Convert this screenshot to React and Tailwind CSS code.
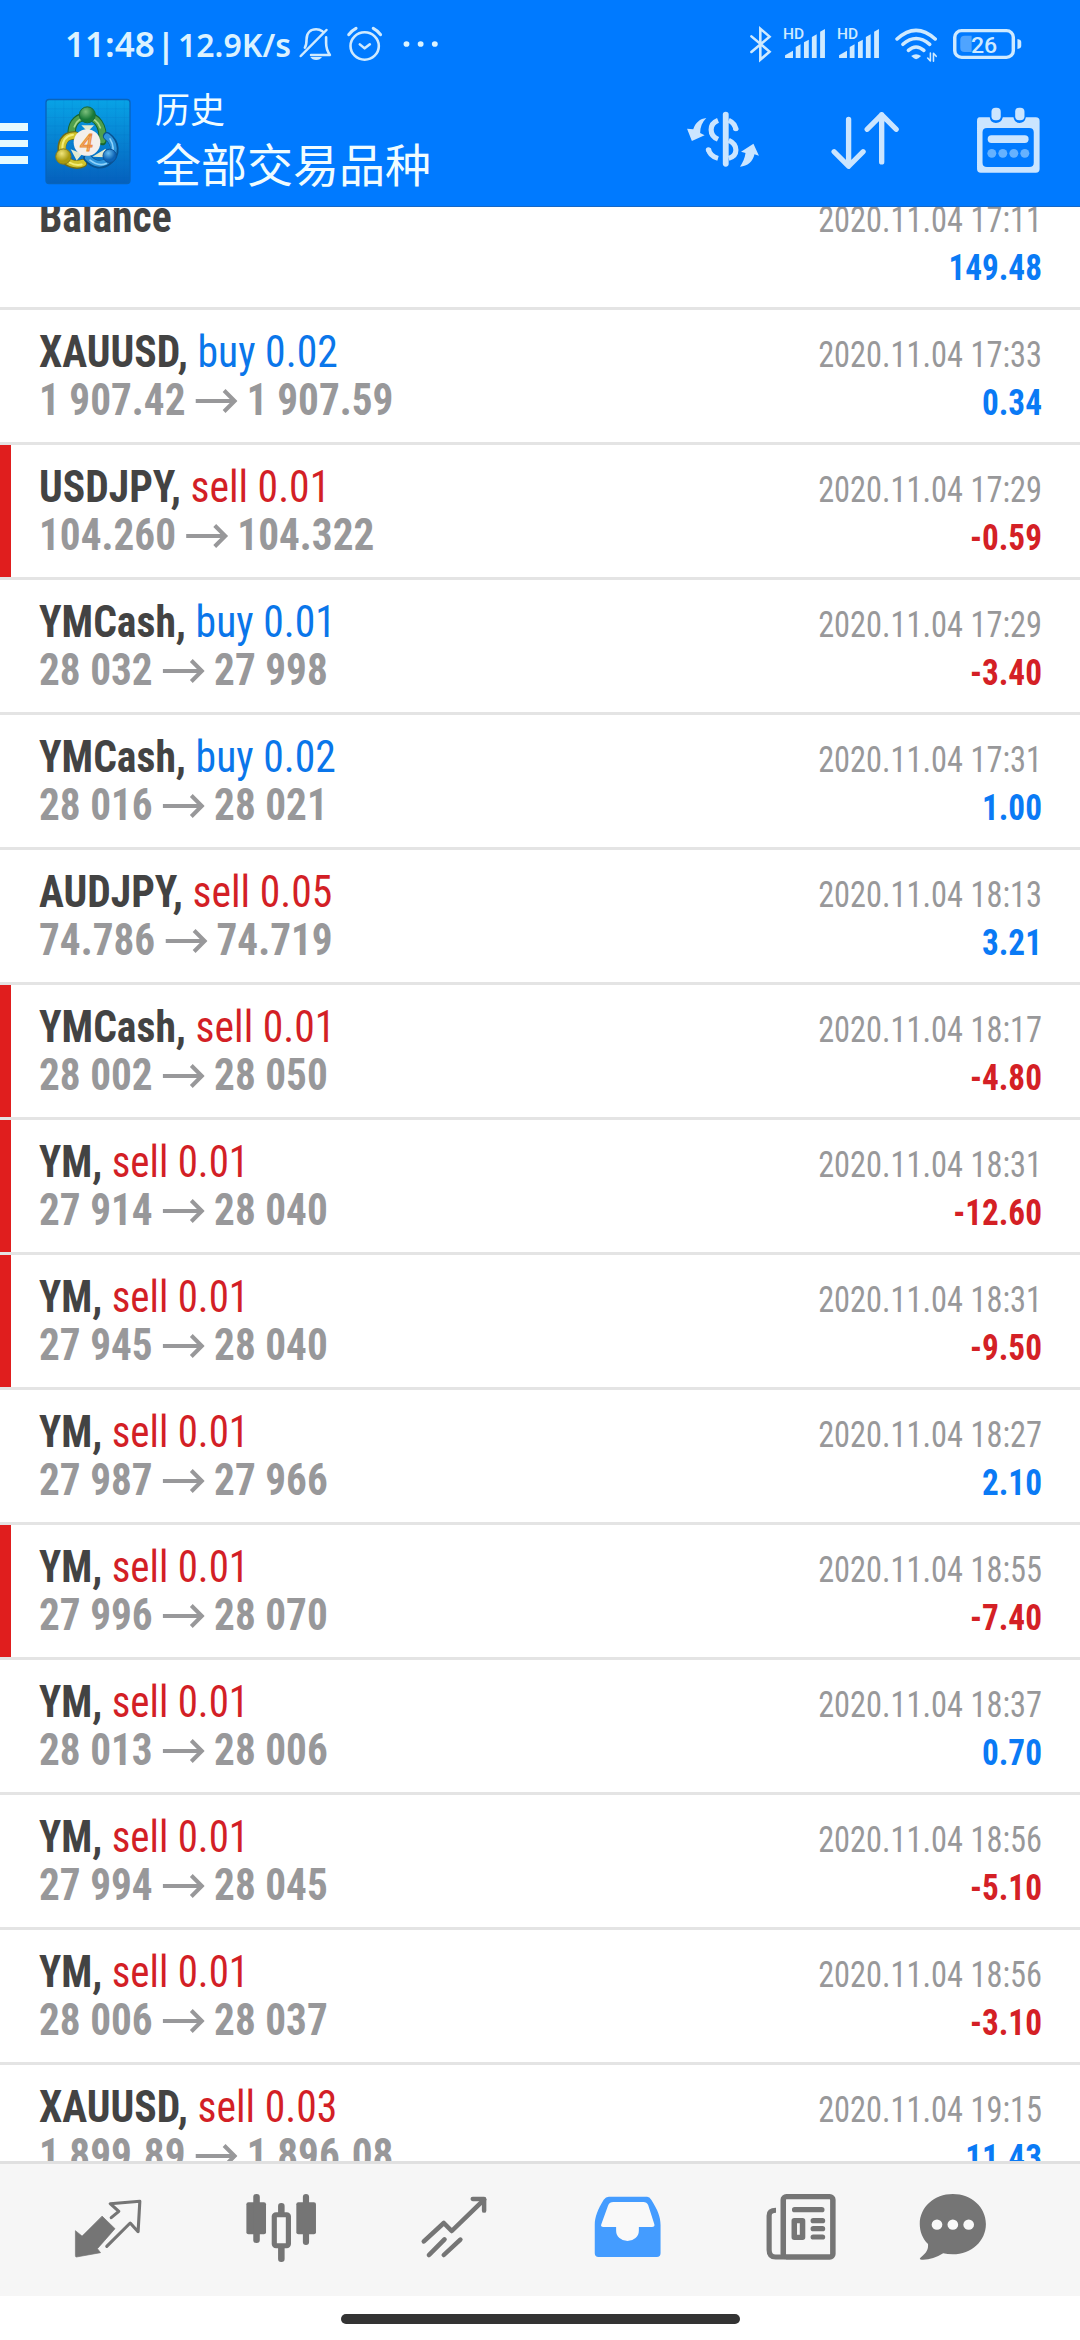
import React from "react";

const trades = [
  ["XAUUSD", "buy", "0.02", "1 907.42", "1 907.59", "17:33", "0.34", false],
  ["USDJPY", "sell", "0.01", "104.260", "104.322", "17:29", "-0.59", true],
  ["YMCash", "buy", "0.01", "28 032", "27 998", "17:29", "-3.40", false],
  ["YMCash", "buy", "0.02", "28 016", "28 021", "17:31", "1.00", false],
  ["AUDJPY", "sell", "0.05", "74.786", "74.719", "18:13", "3.21", false],
  ["YMCash", "sell", "0.01", "28 002", "28 050", "18:17", "-4.80", true],
  ["YM", "sell", "0.01", "27 914", "28 040", "18:31", "-12.60", true],
  ["YM", "sell", "0.01", "27 945", "28 040", "18:31", "-9.50", true],
  ["YM", "sell", "0.01", "27 987", "27 966", "18:27", "2.10", false],
  ["YM", "sell", "0.01", "27 996", "28 070", "18:55", "-7.40", true],
  ["YM", "sell", "0.01", "28 013", "28 006", "18:37", "0.70", false],
  ["YM", "sell", "0.01", "27 994", "28 045", "18:56", "-5.10", false],
  ["YM", "sell", "0.01", "28 006", "28 037", "18:56", "-3.10", false],
  ["XAUUSD", "sell", "0.03", "1 899.89", "1 896.08", "19:15", "11.43", false],
];

function Icon({ box, className, children }) {
  return (
    <svg viewBox={box} preserveAspectRatio="none" className={"block shrink-0 [font-stretch:100%] " + className} fill="none" strokeLinecap="round" strokeLinejoin="round">
      {children}
    </svg>
  );
}

function Signal({ className }) {
  return (
    <Icon box="703 75 128 114" className={"h-[38px] w-[44px] " + className}>
      <text x="703" y="117" fontSize="45" fontWeight="500" fontFamily="Roboto, sans-serif" fill="#cfeaff">HD</text>
      <g fill="#cfeaff">
        <path d="M709 174v-8l23-14v22z" />
        <path d="M740 174v-33l14-8v41z" />
        <path d="M764 174v-47l14-8v55z" />
        <path d="M787 174v-63l14-8v71z" />
        <path d="M811 174v-79l14-8v87z" />
      </g>
    </Icon>
  );
}

function StatusBar() {
  return (
    <div className="flex h-[88px] items-start text-[#dcf2ff]">
      <div className="ml-[65px] mt-[20px] flex h-[48px] w-[233px] items-baseline whitespace-nowrap font-['Noto_Sans',sans-serif] font-semibold leading-[48px] [font-stretch:100%]">
        <span className="text-[35px]">11:48</span>
        <span className="ml-[2px] text-[33px] font-bold">|</span>
        <span className="ml-[3px] text-[32px]">12.9K/s</span>
      </div>
      <Icon box="865 75 105 114" className="mt-[25px] h-[38px] w-[36px]">
        <g stroke="#cfeaff" strokeWidth="7.5">
          <path d="M873 168L948 90M885 143c5-8 5-14 5-25 0-20 12-30 28-30 8 0 14 3 18 6M947 112v18c0 18 5 26 11 35h-55" />
        </g>
        <path d="M901 171h34c-4 6-9 9-17 9s-13-3-17-9z" fill="#cfeaff" />
      </Icon>
      <Icon box="1005 75 110 114" className="ml-[12px] mt-[25px] h-[38px] w-[38px]">
        <g stroke="#cfeaff" strokeWidth="7.5">
          <circle cx="1059" cy="138" r="41" />
          <path d="M1045 133l14 12 15-12" />
          <path d="M1013 104q8-12 21-19M1105 104q-8-12-21-19" strokeWidth="9" />
        </g>
      </Icon>
      <Icon box="1167 75 110 114" className="ml-[18px] mt-[25px] h-[38px] w-[38px]">
        <g fill="#dcf4ff">
          <circle cx="1180" cy="132" r="8.5" />
          <circle cx="1221" cy="132" r="8.5" />
          <circle cx="1262" cy="132" r="8.5" />
        </g>
      </Icon>
      <Icon box="604 75 70 114" className="ml-[309px] mt-[25px] h-[38px] w-[24px]">
        <path d="M611 109l53 46-27 24V86l27 24-53 46" stroke="#cfeaff" strokeWidth="7.5" strokeLinejoin="miter" />
      </Icon>
      <Signal className="ml-[10px] mt-[25px]" />
      <Signal className="ml-[10px] mt-[25px]" />
      <Icon box="1025 75 134 114" className="ml-[13px] mt-[25px] h-[38px] w-[46px]">
        <g stroke="#cfeaff" strokeWidth="10.5">
          <path d="M1034 117q55-52 111 0" />
          <path d="M1051 133q38-35 78 0" />
          <path d="M1067 151q22-20 45 0" />
        </g>
        <path d="M1075 168q14-11 29 0l-8 7q-7 5-13 0z" fill="#cfeaff" />
        <path d="M1131 159v24l-8-9M1140 184v-24l8 9" stroke="#cfeaff" strokeWidth="4.5" />
      </Icon>
      <Icon box="1193 75 209 114" className="ml-[12px] mt-[25px] h-[38px] w-[72px]">
        <rect x="1201" y="92" width="170" height="80" rx="20" stroke="#cfeaff" strokeWidth="10" />
        <path d="M1230 107h20v49h-20q-13 0-13-13v-23q0-13 13-13z" fill="#4fa4ff" />
        <path d="M1383 117q11 2 11 9v12q0 7-11 9z" fill="#cfeaff" />
        <text x="1248" y="158" fontSize="67" fontWeight="500" fontFamily="Roboto, sans-serif" fill="#cfeaff">26</text>
      </Icon>
    </div>
  );
}

function Logo() {
  return (
    <svg viewBox="46 38 258 260" className="ml-[17px] mt-[10px] block h-[87px] w-[86px] shrink-0 [font-stretch:100%]">
      <defs>
        <linearGradient id="sky" x1="0" y1="0" x2="0" y2="1"><stop offset="0" stopColor="#08a3e6" /><stop offset="1" stopColor="#0560bd" /></linearGradient>
        <radialGradient id="green" cx=".4" cy=".3"><stop offset="0" stopColor="#7cc07c" /><stop offset="1" stopColor="#197a38" /></radialGradient>
        <radialGradient id="yellow" cx=".4" cy=".3"><stop offset="0" stopColor="#f0e57c" /><stop offset="1" stopColor="#a99a10" /></radialGradient>
        <radialGradient id="blue" cx=".4" cy=".3"><stop offset="0" stopColor="#69bdf0" /><stop offset="1" stopColor="#0d63b5" /></radialGradient>
      </defs>
      <rect x="49" y="42" width="252" height="252" rx="9" fill="url(#sky)" stroke="#0864bb" strokeWidth="4" />
      <path d="M76 44v248M102 44v248M128 44v248M154 44v248M180 44v248M206 44v248M232 44v248M258 44v248M284 44v248M50 70h250M50 96h250M50 122h250M50 148h250M50 174h250M50 200h250M50 226h250M50 252h250M50 278h250" stroke="#0a6fc4" strokeOpacity=".2" strokeWidth="2" />
      <g fill="none" strokeLinecap="round">
        <path d="M126 138C128 108 147 93 173 93s50 26 45 74" stroke="#17662f" strokeWidth="25" />
        <path d="M126 138C128 109 147 94 173 94s50 25 45 70" stroke="#4f9f4c" strokeWidth="19" />
        <path d="M134 124c6-18 18-27 38-27s34 13 40 30" stroke="#a7d889" strokeWidth="5" />
        <path d="M136 150C102 148 92 175 98 205c8 30 42 38 62 28" stroke="#716b17" strokeWidth="26" />
        <path d="M136 150C104 150 94 175 99 205c8 28 38 36 60 28" stroke="#d0c32c" strokeWidth="20" />
        <path d="M130 148q-32 4-32 42M120 231q17 10 36 6" stroke="#f3ec79" strokeWidth="6" />
        <path d="M232 152c28 20 30 54 5 74-20 17-44 14-64-9" stroke="#095290" strokeWidth="25" />
        <path d="M232 153c26 20 27 52 3 72-19 15-42 12-60-8" stroke="#2e94da" strokeWidth="18" />
        <path d="M241 160q18 28 1 54M181 224q26 20 49 10" stroke="#8fd2fa" strokeWidth="5" />
      </g>
      <path d="M123 191l35 14-17 20zM188 214l40-24v25zM155 119h38l-19 20z" fill="#e1ead0" />
      <circle cx="173" cy="88" r="24" fill="url(#green)" stroke="#17693a" strokeWidth="3" />
      <circle cx="101" cy="213" r="23" fill="url(#yellow)" stroke="#877c19" strokeWidth="3" />
      <circle cx="240" cy="211" r="20" fill="url(#blue)" stroke="#0c5298" strokeWidth="3" />
      <circle cx="172" cy="171" r="40" fill="#f3efeb" />
      <text x="171" y="195" textAnchor="middle" fontSize="70" fontStyle="italic" fontFamily="Roboto, sans-serif" fill="#f6ba72" stroke="#e98a38" strokeWidth="3">4</text>
    </svg>
  );
}

function Toolbar() {
  return (
    <div className="flex h-[118px] items-start">
      <div className="mt-[35px] flex w-[28px] flex-col gap-[9px]">
        <div className="h-[7.5px] bg-[#e6faff]" />
        <div className="h-[7.5px] bg-[#e6faff]" />
        <div className="h-[7.5px] bg-[#e6faff]" />
      </div>
      <Logo />
      <div className="ml-[24px] w-[530px] whitespace-nowrap font-['Noto_Sans_CJK_SC',sans-serif] text-[#f0fcff]">
        <div className="-mt-[3px] h-[46px] text-[35px] leading-[46px]">历史</div>
        <div className="mt-[1px] h-[60px] text-[46px] leading-[60px]">全部交易品种</div>
      </div>
      <Icon box="418 330 221 180" className="mt-[22px] h-[60px] w-[76px]">
        <g fill="#cbe5ff">
          <rect x="528" y="335" width="17" height="165" rx="8.5" />
          <path d="M480 354C462 356 448 368 442 388L424 386L438 423L475 406L462 399C462 382 468 366 480 354z" />
          <path d="M578 500C586 488 592 474 594 459L581 455L617 431L633 467L620 463C616 484 600 499 578 500z" />
        </g>
        <g stroke="#cbe5ff" strokeWidth="15" strokeLinecap="butt">
          <path d="M514 361q-20 8-20 28t20 29M545 361q18 8 21 29M545 421q21 10 21 29t-21 25M486 446q3 22 28 29" />
        </g>
        <circle cx="566" cy="386" r="7.5" fill="#cbe5ff" />
        <circle cx="486" cy="449" r="7.5" fill="#cbe5ff" />
      </Icon>
      <Icon box="842 330 209 186" className="ml-[69px] mt-[22px] h-[62px] w-[72px]">
        <path d="M896 358v140M854 455l42 44 42-44M992 486V344M950 388l42-44 42 44" stroke="#cbe5ff" strokeWidth="15.5" />
      </Icon>
      <Icon box="1266 315 192 210" className="ml-[74px] mt-[17px] h-[70px] w-[66px]">
        <path fillRule="evenodd" fill="#cbe5ff" d="M1276 352h30q2 17 18 17t20-17h31q3 17 18 17t18-17h29q11 0 11 11v144q0 11-11 11h-160q-11 0-11-11V363q0-11 7-11zM1298 384q-13 0-13 13v91q0 13 13 13h123q13 0 13-13v-91q0-13-13-13z" />
        <g fill="#cbe5ff">
          <rect x="1311" y="323" width="27" height="38" rx="12" />
          <rect x="1380" y="323" width="27" height="38" rx="12" />
          <rect x="1300" y="406" width="119" height="23" rx="11" />
        </g>
        <g fill="#66b2ff">
          <circle cx="1312" cy="460" r="13" /><circle cx="1344" cy="460" r="13" /><circle cx="1376" cy="460" r="13" /><circle cx="1408" cy="460" r="13" />
        </g>
      </Icon>
    </div>
  );
}

function Row({ title, action, prices, time, profit, marked }) {
  const squeeze = title === "YM," ? "scale-x-[0.93]" : "scale-x-[0.946]";
  return (
    <div className="flex h-[135px] shrink-0 border-b-[3px] border-[#e4e4e4]">
      <div className={marked ? "w-[11px] bg-[#e01e1e]" : "w-[11px]"} />
      <div className="ml-[28px] flex-1 whitespace-nowrap pt-[18px] text-[44px] leading-[48px]">
        <div className={"h-[48px] origin-left " + squeeze}>
          <span className="font-bold text-[#434343]">{title}</span>
          {action && <span className={action.startsWith("buy") ? "text-[#0a76ea]" : "text-[#d31f26]"}> {action}</span>}
        </div>
        {prices && (
          <div className="flex h-[48px] origin-left scale-x-[0.937] font-bold text-[#98989a]">
            <span>{prices[0]}</span>
            <svg viewBox="0 0 42 24" preserveAspectRatio="none" className="ml-[11px] mr-[9.5px] mt-[13px] block h-[24px] w-[45px]" fill="none" stroke="currentColor" strokeWidth="4">
              <path d="M0 12h39M28.500 1.500L39 12L28.500 22.500" />
            </svg>
            <span>{prices[1]}</span>
          </div>
        )}
      </div>
      <div className="mr-[38px] whitespace-nowrap pt-[21px] text-right text-[36px] leading-[48px]">
        <div className="h-[48px] origin-right scale-x-[0.899] text-[#98989a]">2020.11.04 {time}</div>
        <div className={"origin-right scale-x-[0.922] " + (profit.startsWith("-") ? "font-bold text-[#d42025]" : "font-bold text-[#0a7af5]")}>{profit}</div>
      </div>
    </div>
  );
}

function TabBar() {
  return (
    <div className="flex h-[135px] items-start border-t-[3px] border-[#e0e0e0] bg-[#f6f6f6] pl-[73px] pt-[29px]">
      <Icon box="212 429 209 210" className="h-[70px] w-[72px]">
        <path d="M297 499L334 536L283 596L292 608L222 621Q219 621 219 617V542L238 558z" fill="#757575" stroke="#757575" strokeWidth="2" />
        <path d="M323 503L345 484L320 461L406 454L401 545L378 519L310 589" stroke="#757575" strokeWidth="9" />
      </Icon>
      <Icon box="711 429 209 210" className="ml-[100px] h-[70px] w-[72px]">
        <g fill="#757575">
          <rect x="715" y="457" width="57" height="96" rx="6" />
          <rect x="735" y="432" width="19" height="147" rx="9" />
          <rect x="860" y="457" width="57" height="96" rx="6" />
          <rect x="879" y="432" width="18" height="153" rx="9" />
          <rect x="807" y="459" width="19" height="40" rx="9" />
          <rect x="807" y="585" width="19" height="51" rx="9" />
        </g>
        <rect x="796" y="494" width="41" height="93" rx="5" fill="#f6f6f6" stroke="#757575" strokeWidth="15" />
      </Icon>
      <Icon box="1217 429 209 210" className="ml-[102px] h-[70px] w-[72px]">
        <path d="M1231 574L1289 519L1312 543L1406 449M1246 615L1291 568M1289 615L1337 569" stroke="#757575" strokeWidth="13.500" />
        <path d="M1373 447H1406V482" stroke="#757575" strokeWidth="13" />
      </Icon>
      <Icon box="151 429 209 210" className="ml-[101px] h-[70px] w-[72px]">
        <path fillRule="evenodd" fill="#449cff" d="M200 440H311Q318 440 323 449C342 480 350 500 350 525V610Q350 621 339 621H170Q159 621 159 610V525C159 500 168 478 185 449Q191 440 200 440z" />
        <path d="M213 456H300Q310 456 314 465L332 523Q334 531 325 531H287V542A33 31 0 0 1 221 542V531H184Q175 531 178 523L198 466Q202 456 213 456z" fill="#f9f9f9" />
      </Icon>
      <Icon box="653 429 209 210" className="ml-[101px] h-[70px] w-[72px]">
        <rect x="706" y="440" width="144" height="181" rx="9" stroke="#757575" strokeWidth="16" />
        <path d="M685 481Q665 481 665 497V600Q665 621 684 621H710" stroke="#757575" strokeWidth="15" strokeLinecap="butt" />
        <path d="M739 479H818M793 512H820M793 536H820M793 561H820" stroke="#757575" strokeWidth="15.500" />
        <rect x="738" y="512" width="24" height="50" stroke="#757575" strokeWidth="16" />
      </Icon>
      <Icon box="1095 429 209 210" className="ml-[80px] h-[70px] w-[72px]">
        <path d="M1199 432C1253 432 1295 471 1295 522S1253 613 1199 613Q1183 613 1171 610C1151 623 1129 630 1109 629Q1100 628 1105 623C1124 607 1128 598 1127 582C1111 566 1103 545 1103 522C1103 471 1145 432 1199 432z" fill="#757575" />
        <g fill="#f9f9f9"><circle cx="1153" cy="524" r="15.500" /><circle cx="1199" cy="524" r="15.500" /><circle cx="1245" cy="524" r="15.500" /></g>
      </Icon>
    </div>
  );
}

export default function App() {
  return (
    <div className="flex h-[2340px] w-[1080px] flex-col overflow-hidden bg-white font-['Roboto_Condensed','Roboto',sans-serif] [font-stretch:75%]">
      <header className="h-[207px] shrink-0 border-b border-[#1668c6] bg-[#007aff]">
        <StatusBar />
        <Toolbar />
      </header>
      <main className="flex h-[1954px] shrink-0 flex-col overflow-hidden">
        <div className="-mt-[32px]">
          <Row title="Balance" time="17:11" profit="149.48" />
          {trades.map((t, i) => (
            <Row key={i} title={t[0] + ","} action={t[1] + " " + t[2]} prices={[t[3], t[4]]} time={t[5]} profit={t[6]} marked={t[7]} />
          ))}
        </div>
      </main>
      <TabBar />
      <div className="mx-auto mt-[18px] h-[10px] w-[399px] rounded-full bg-[#333333]" />
    </div>
  );
}
